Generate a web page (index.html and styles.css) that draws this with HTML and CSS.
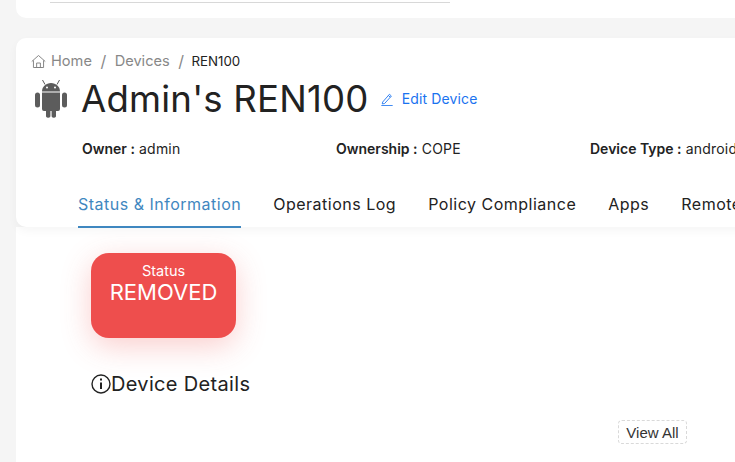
FILE: index.html
```html
<!DOCTYPE html>
<html lang="en">
<head>
<meta charset="utf-8">
<title>REN100</title>
<link rel="stylesheet" href="styles.css">
</head>
<body>
<div class="page">
  <div class="top-card"><div class="top-line"></div></div>
  <div class="device-card">
    <nav class="crumbs">
      <svg class="home-icon" viewBox="0 0 16 16" fill="none" stroke="#808080" stroke-width="1"><path d="M.8 8 8 1.6 15.2 8M2.6 6.8V14.4H13.4V6.8M6 14.4V9.6H10V14.4M4.6 14.4H11.4"/></svg>
      <span class="crumb">Home</span><span class="sep">/</span><span class="crumb">Devices</span><span class="sep">/</span><span class="crumb-now">REN100</span>
    </nav>
    <div class="title-row">
      <svg class="android" viewBox="0 0 34 40" fill="#5c5c5c">
        <path d="M8 12.4C8 7.6 12 4 17 4S26 7.6 26 12.4Z"/>
        <path d="M11 5.5 8.5 1M23 5.5 25.5 1" stroke="#5c5c5c" stroke-width="1"/>
        <circle cx="13" cy="8.6" r="1" fill="#fff"/><circle cx="21" cy="8.6" r="1" fill="#fff"/>
        <path d="M8 13.6H26V30A2 2 0 0 1 24 32H22V37.5A2.5 2.5 0 0 1 17.6 37.5V32H16.4V37.5A2.5 2.5 0 0 1 12 37.5V32H10A2 2 0 0 1 8 30Z"/>
        <rect x="1" y="13.4" width="5" height="15" rx="2.5"/><rect x="28" y="13.4" width="5" height="15" rx="2.5"/>
      </svg>
      <h1 class="title">Admin's REN100</h1>
      <a class="edit-link">
        <svg class="edit-icon" viewBox="0 0 16 16" fill="none" stroke="#1a73f0" stroke-width="1"><path d="M3 11.5 10.8 2.6 13 4.6 5.2 13.2 2.6 13.6ZM9.6 4 11.8 6M1.5 15.5H14.5"/></svg>
        <span>Edit Device</span>
      </a>
    </div>
    <div class="info-row">
      <div class="info-item"><b>Owner :</b> admin</div>
      <div class="info-item"><b>Ownership :</b> COPE</div>
      <div class="info-item"><b>Device Type :</b> android</div>
    </div>
    <div class="tabs">
      <div class="tab tab-active">Status &amp; Information</div>
      <div class="tab">Operations Log</div>
      <div class="tab">Policy Compliance</div>
      <div class="tab">Apps</div>
      <div class="tab">Remote Control</div>
    </div>
  </div>
  <main class="panel">
    <div class="status-card">
      <div class="status-label">Status</div>
      <div class="status-value">REMOVED</div>
    </div>
    <h2 class="details-title">
      <svg class="info-icon" viewBox="0 0 20 20" fill="none" stroke="#222" stroke-width="1.4"><circle cx="10" cy="10" r="9"/><path d="M10 8.6V15" stroke-width="2"/><path d="M10 4.6V6.6" stroke-width="2"/></svg>
      <span>Device Details</span>
    </h2>
    <div class="actions"><button class="view-all">View All</button></div>
  </main>
</div>
</body>
</html>
```
FILE: styles.css
```css
* { box-sizing: border-box; }
html, body { margin: 0; height: 100%; }
body {
  width: 735px;
  height: 462px;
  overflow: hidden;
  background: #f5f5f5;
  font-family: Inter, "Open Sans", sans-serif;
  color: #222;
}
.page { width: 1000px; padding-left: 16px; }
.top-card {
  height: 18px;
  background: #fff;
  border-radius: 0 0 10px 10px;
  padding: 2px 0 0 34px;
}
.top-line { width: 400px; height: 1px; background: #d8d8d8; }
.device-card {
  margin-top: 20px;
  height: 189px;
  background: #fff;
  border-radius: 10px 10px 0 10px;
  box-shadow: 0 4px 10px rgba(0,0,0,.04);
  padding: 13px 0 0 16px;
  position: relative;
  z-index: 1;
}
.crumbs { display: flex; align-items: center; height: 20px; font-size: 14.6px; color: #888; }
.home-icon { width: 15px; height: 15px; margin: 0 4px 0 0; transform: translateX(-1px); }
.sep { margin: 0 8.5px; font-size: 16px; }
.crumb-now { color: #222; font-size: 13.3px; margin-left: -1px; }
.title-row { display: flex; align-items: center; height: 55px; }
.android { width: 34px; height: 40px; margin: 0 0 0 2px; }
.title { margin: 0 0 0 13px; font-size: 36.6px; font-weight: 400; color: #222; letter-spacing: .2px; }
.edit-link { display: flex; align-items: center; margin-left: 11px; font-size: 14px; letter-spacing: .15px; color: #1a73f0; }
.edit-icon { width: 14px; height: 14px; margin-right: 8px; }
.info-row { display: flex; margin-top: 12px; padding-left: 50px; height: 20px; align-items: center; font-size: 14px; letter-spacing: .2px; }
.info-item { width: 254px; white-space: nowrap; }
.info-item b { font-weight: 600; letter-spacing: 0; }
.tabs { display: flex; gap: 32px; margin-top: 30px; padding-left: 46px; font-size: 16px; letter-spacing: .5px; }
.tab { height: 40px; padding-top: 6px; line-height: 20px; white-space: nowrap; }
.tab-active { color: #3f87c0; border-bottom: 2px solid #3f87c0; }
.panel { background: #fff; height: 240px; padding: 26px 48px 0 75px; position: relative; }
.status-card {
  width: 145px;
  height: 85px;
  border-radius: 18px;
  background: #ee4e4d;
  color: #fff;
  text-align: center;
  padding-top: 9px;
  box-shadow: 0 8px 30px rgba(238,78,77,.28);
}
.status-label { font-size: 14.5px; line-height: 18px; }
.status-value { font-size: 22px; line-height: 24px; }
.details-title { display: flex; align-items: center; margin: 34px 0 0; font-size: 20px; font-weight: 400; letter-spacing: .33px; color: #222; height: 24px; }
.info-icon { width: 20px; height: 20px; }
.actions { width: 596px; display: flex; justify-content: flex-end; margin-top: 24px; }
.view-all {
  width: 69px;
  height: 24px;
  padding: 0;
  background: #fff;
  border: 1px dashed #d9d9d9;
  border-radius: 4px;
  font-family: "Liberation Sans", sans-serif;
  font-size: 15px;
  color: #333;
}
```
